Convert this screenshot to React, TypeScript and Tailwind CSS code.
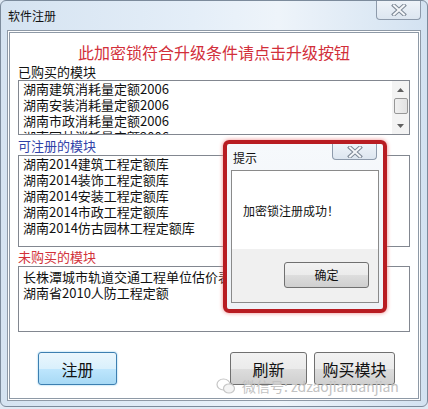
import React from "react";

const CJK = "font-['Microsoft_YaHei','Noto_Sans_CJK_SC',sans-serif]";

const bought = [
  "湖南建筑消耗量定额2006",
  "湖南安装消耗量定额2006",
  "湖南市政消耗量定额2006",
  "湖南园林消耗量定额2006",
];

const available = [
  "湖南2014建筑工程定额库",
  "湖南2014装饰工程定额库",
  "湖南2014安装工程定额库",
  "湖南2014市政工程定额库",
  "湖南2014仿古园林工程定额库",
];

const notBought = ["长株潭城市轨道交通工程单位估价表", "湖南省2010人防工程定额"];

const CloseGlyph = () => (
  <svg width="16" height="12" viewBox="0 0 16 12">
    <path d="M3 1.5 L13 10.5 M13 1.5 L3 10.5" stroke="#7d8896" strokeWidth="4" strokeLinecap="square" />
    <path d="M3 1.5 L13 10.5 M13 1.5 L3 10.5" stroke="#f4f6f9" strokeWidth="2" strokeLinecap="square" />
  </svg>
);

const CloseButton = ({ className }: { className: string }) => (
  <div
    className={`flex items-center justify-center rounded-b-[4px] border border-t-0 border-[#8d9aab] bg-[linear-gradient(#eef3f9,#dde6f0)] ${className}`}
  >
    <CloseGlyph />
  </div>
);

const ListBox = ({
  items,
  className,
  scroll,
}: {
  items: string[];
  className: string;
  scroll?: boolean;
}) => (
  <div className={`flex overflow-hidden border border-[#828790] bg-white ${className}`}>
    <div className="flex-1 pl-[4px] text-[13px] leading-[16px] text-[#111]">
      {items.map((it) => (
        <div key={it} className="whitespace-nowrap">
          {it}
        </div>
      ))}
    </div>
    {scroll && (
      <div className="flex w-[17px] flex-col bg-[#f3f3f3]">
        <div className="flex h-[17px] items-center justify-center">
          <svg width="7" height="4" viewBox="0 0 7 4">
            <path d="M0 4 L3.5 0 L7 4 Z" fill="#606060" />
          </svg>
        </div>
        <div className="mx-auto h-[16px] w-[14px] rounded-[2px] border border-[#979797] bg-[linear-gradient(90deg,#f0f0f0,#e2e2e2)]" />
        <div className="flex-1" />
        <div className="flex h-[17px] items-center justify-center">
          <svg width="7" height="4" viewBox="0 0 7 4">
            <path d="M0 0 L3.5 4 L7 0 Z" fill="#606060" />
          </svg>
        </div>
      </div>
    )}
  </div>
);

const WinButton = ({ label, className }: { label: string; className: string }) => (
  <div
    className={`flex items-center justify-center rounded-[3px] border border-[#707070] bg-[linear-gradient(#f2f2f2_0%,#ebebeb_50%,#dddddd_51%,#cfcfcf_100%)] text-[#111] ${className}`}
  >
    {label}
  </div>
);

export default function App() {
  return (
    <div className={`relative h-[409px] w-[428px] overflow-hidden bg-[#dfe9f4] ${CJK}`}>
      <div className="h-[407px] w-[428px] rounded-[6px] border border-[#7c8b9c] bg-[linear-gradient(90deg,#d5e3f1_0%,#e4eef8_45%,#eef4fa_65%,#d3e2f1_100%)]">
        {/* title bar */}
        <div className="flex h-[29px] items-start justify-between">
          <div className="pl-[7px] pt-[7px] text-[12px] leading-[16px] text-[#111]">软件注册</div>
          <CloseButton className="mr-[6px] h-[19px] w-[45px]" />
        </div>

        {/* client area */}
        <div className="ml-[6px] h-[371px] w-[414px] border-[3px] border-double border-[#8e99a6] bg-white">
          <div className="px-[8px]">
            <div className="pt-[10px] text-center text-[16px] leading-[18px] text-[#d22f3a]">
              此加密锁符合升级条件请点击升级按钮
            </div>
            <div className="mt-[3px] h-[16px] text-[13px] leading-[16px] text-[#111]">已购买的模块</div>
            <ListBox items={bought} scroll className="h-[55px]" />
            <div className="h-[20px] pt-[3px] text-[13px] leading-[16px] text-[#3142a8]">可注册的模块</div>
            <ListBox items={available} className="h-[92px]" />
            <div className="h-[19px] pt-[2px] text-[13px] leading-[16px] text-[#d2323a]">未购买的模块</div>
            <ListBox items={notBought} className="h-[66px] pt-[2px]" />

            <div className="mt-[20px] flex h-[33px] pl-[20px] pr-[15px] text-[16px]">
              <div className="flex w-[79px] items-center justify-center rounded-[3px] border border-[#3c7fb1] bg-[linear-gradient(#eaf6fd_0%,#d9f0fc_50%,#bee6fd_51%,#a7d9f5_100%)] text-[#111] shadow-[0_0_2px_#7fc4ec]">
                注册
              </div>
              <div className="flex-1" />
              <WinButton label="刷新" className="w-[77px]" />
              <WinButton label="购买模块" className="ml-[7px] w-[81px]" />
            </div>
          </div>
        </div>
      </div>

      {/* message box */}
      <div className="absolute left-[223px] top-[140px] h-[173px] w-[164px] rounded-[6px] border-[4px] border-[#b81c22] bg-[linear-gradient(#f6f9fc,#eef2f7)] shadow-[0_0_4px_#e88]">
        <div className="flex h-[26px] items-start justify-between">
          <div className="pl-[6px] pt-[7px] text-[12px] leading-[14px] text-[#111]">提示</div>
          <CloseButton className="mr-[6px] h-[16px] w-[45px]" />
        </div>
        <div className="mx-[4px] flex h-[133px] flex-col border border-[#8a8a8a]">
          <div className="h-[78px] bg-white pl-[11px] pt-[32px] text-[12px] leading-[16px] text-[#111]">
            加密锁注册成功！
          </div>
          <div className="flex-1 bg-[#f0f0f0] pl-[52px] pt-[13px]">
            <WinButton label="确定" className="h-[26px] w-[85px] text-[12px]" />
          </div>
        </div>
      </div>

      {/* watermark */}
      <div className="absolute left-[216px] top-[377px] flex items-center gap-[6px] text-[14px] leading-[18px] text-[#c2c2c2]">
        <svg width="20" height="17" viewBox="0 0 20 17" fill="none" stroke="#c6c6c6" strokeWidth="1.2">
          <ellipse cx="7.5" cy="6.5" rx="6.5" ry="5.5" />
          <ellipse cx="13" cy="10.5" rx="5.5" ry="4.5" fill="#f4f4f4" />
        </svg>
        <span className="font-['Microsoft_YaHei','Noto_Sans_CJK_SC',sans-serif]">微信号: zdzaojiaruanjian</span>
      </div>
    </div>
  );
}
